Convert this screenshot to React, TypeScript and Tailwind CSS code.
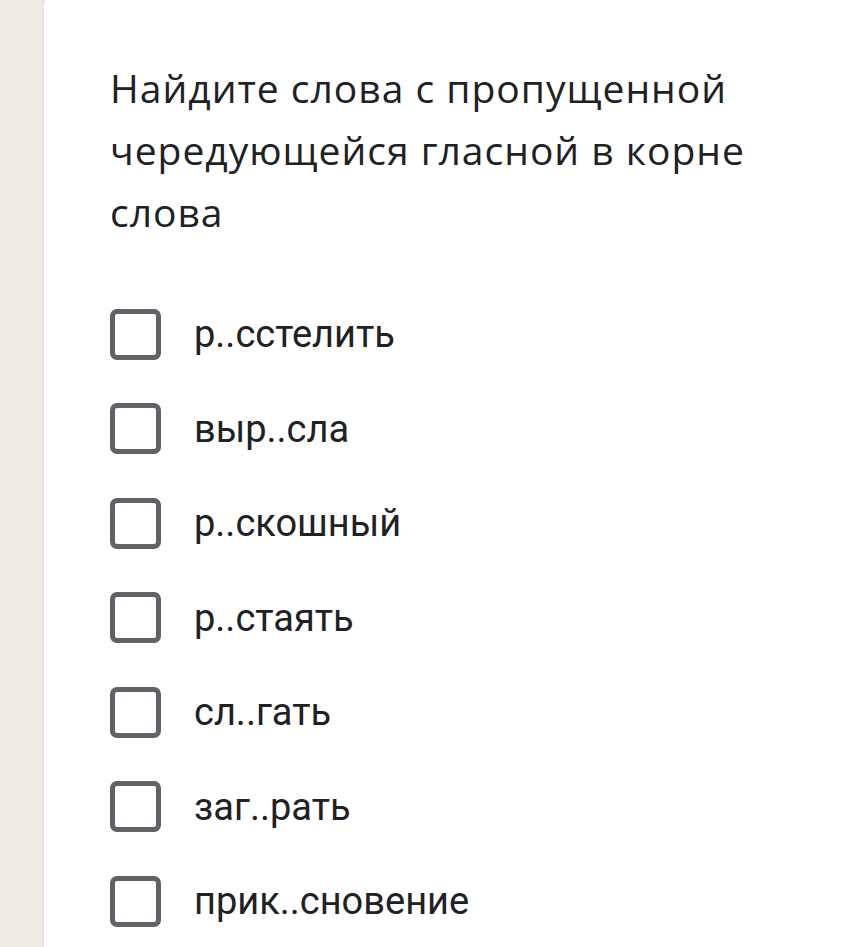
import { Fragment } from 'react'

const options = [
  'р..сстелить',
  'выр..сла',
  'р..скошный',
  'р..стаять',
  'сл..гать',
  'заг..рать',
  'прик..сновение',
]

export default function App() {
  return (
    <div className="flex h-[947px] w-[864px] overflow-hidden bg-[#f1ebe6]" style={{ fontFamily: 'Roboto, "Noto Sans", sans-serif' }}>
      <div className="w-[44px] shrink-0 border-r-2 border-[#e9e3de]" />
      <div className="relative -mt-[4px] flex-1 rounded-tl-[10px] bg-white pl-[66px] pt-[61px]">
        <span className="absolute left-[857px] top-[70px] whitespace-nowrap text-[30px] text-[#5f6368]">1 балл</span>
        <h1
          className="w-[665px] text-[39px] leading-[62px] tracking-[1px] text-[#202124]"
          style={{ fontFamily: '"Open Sans", Roboto, sans-serif' }}
        >
          Найдите слова с пропущенной чередующейся гласной в корне слова
        </h1>
        <ul className="mt-[44px] flex flex-col">
          {options.map((o) => (
            <Fragment key={o}>
              <li className="flex h-[94.5px] items-center gap-[33px]">
                <span className="h-[51px] w-[51px] shrink-0 rounded-[7px] border-[5px] border-[#5f6368]" />
                <span className="text-[38px] leading-none text-[#202124]">{o}</span>
              </li>
            </Fragment>
          ))}
        </ul>
      </div>
    </div>
  )
}
